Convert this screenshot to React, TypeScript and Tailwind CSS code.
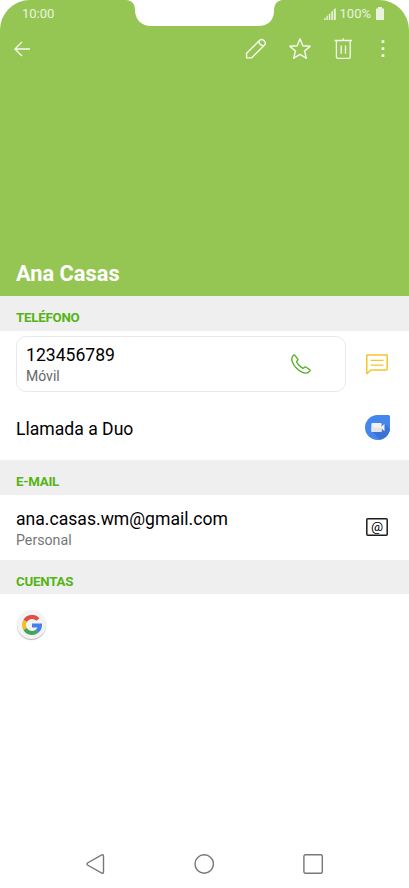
import type { ReactNode } from "react";

function StatusBar() {
  return (
    <div className="flex h-7 items-center justify-between pl-[22px] pr-[25px] text-[13px] leading-7 text-white/80">
      <span>10:00</span>
      <div className="flex items-center">
        <svg className="-mt-px h-3 w-3" viewBox="0 0 12 12" fill="currentColor">
          <path d="M0 12V10.8L1.5 9.4V12zM2.4 12V8.6L3.8 7.3V12zM4.8 12V6.3L6.3 4.9V12zM7.3 12V3.9L8.9 2.4V12zM9.8 12V1.5L11.8 0V12z" />
        </svg>
        <span className="ml-1">100%</span>
        <svg className="-mt-[2px] ml-[5px] h-[13px] w-2" viewBox="0 0 8 13" fill="currentColor">
          <path d="M2 0H6V1.5H8V13H0V1.5H2z" />
        </svg>
      </div>
    </div>
  );
}

function Toolbar() {
  return (
    <div className="flex h-[42px] items-center pl-[14px] pr-[23px] text-white/90">
      <svg className="h-4 w-4" viewBox="0 0 16 16" fill="none" stroke="currentColor" strokeWidth="1.4">
        <path d="M8 1L1 8L8 15M1 8H16" />
      </svg>
      <svg className="ml-[215px] h-[22px] w-[22px]" viewBox="0 0 22 22" fill="none" stroke="currentColor" strokeWidth="1.4" strokeLinejoin="round">
        <path d="M1.6 19.9V15.3L14.7 2.2Q16.8 .5 18.7 2.4L19.4 3.1Q21.2 5.1 19.5 7.1L6.5 19.9zM14.1 2.9Q13.9 7.4 18.7 7.8" />
      </svg>
      <svg className="ml-[21px] h-6 w-6" viewBox="0 0 24 24" fill="none" stroke="currentColor" strokeWidth="1.4" strokeLinejoin="round">
        <path d="M12 1.8L14.8 8.7L22.2 9.3L16.5 14.1L18.4 21.3L12 17.4L5.6 21.3L7.5 14.1L1.8 9.3L9.2 8.7z" />
      </svg>
      <svg className="ml-[22px] h-[22px] w-[18px]" viewBox="0 0 18 22" fill="none" stroke="currentColor" strokeWidth="1.3">
        <path d="M.5 2.5H18M9.2 .3V2.5M2.4 2.5V18.7Q2.4 20.4 4 20.4H14.6Q16.2 20.4 16.2 18.7V2.5M7.2 7.5V15.7M11.5 7.5V15.7" />
      </svg>
      <svg className="ml-[29px] h-[18px] w-1" viewBox="0 0 4 18" fill="currentColor">
        <path d="M.6 .3H3.3V3H.6zM.6 7.2H3.3V9.9H.6zM.6 14.3H3.3V17H.6z" />
      </svg>
    </div>
  );
}

function Header() {
  return (
    <header className="relative flex h-[296px] flex-col rounded-t-[30px] bg-[#95c653]">
      {/* Screen notch */}
      <svg className="absolute left-[126px] top-0 h-[26px] w-[157px]" viewBox="0 0 157 26" fill="#fff">
        <path d="M0 0C6 .5 9 4 9 10C9 19 15 26 25 26H132C142 26 148 20 148 11C148 4 151 .5 157 0z" />
      </svg>
      <StatusBar />
      <Toolbar />
      <h1 className="mt-auto mb-2 pl-4 text-[21.8px] leading-7 font-bold text-white">Ana Casas</h1>
    </header>
  );
}

function SectionTitle({ children }: { children: ReactNode }) {
  return (
    <h2 className="h-[34.5px] bg-[#efefef] pt-[5px] pl-4 text-[13.3px] leading-[33px] font-bold tracking-[-0.018em] text-[#55b414]">
      {children}
    </h2>
  );
}

function PhoneIcon() {
  return (
    <svg className="h-5 w-5" viewBox="0 0 20 20" fill="none" stroke="#50ac20" strokeWidth="1.3" strokeLinejoin="round">
      <path d="M2.8 1Q3.4 .7 3.9 1.3L6.9 5.1Q7.3 5.6 6.8 6.1L5.9 7.2Q5.4 7.8 5.9 8.6Q8.2 12.2 11.5 14.1Q12.2 14.5 12.7 13.9L13.7 13Q14.2 12.6 14.8 13L18.8 15.8Q19.4 16.3 18.9 16.9C17.2 19.2 14.5 19.9 11 18.1C6.6 15.9 3 12.1 1.4 8C.2 4.8 1.1 2.3 2.8 1z" />
    </svg>
  );
}

function MessageIcon() {
  return (
    <svg className="h-[21px] w-[22px]" viewBox="0 0 22 21" fill="none" stroke="#f4c52e" strokeWidth="1.5" strokeLinejoin="round">
      <path d="M.8 1H21.2V14.7Q21.2 16 19.9 16H5L.8 19.8z" />
      <path d="M4.7 6.3H17.5M4.7 11.2H17.5" strokeWidth="1.2" />
    </svg>
  );
}

function DuoIcon() {
  return (
    <svg className="-mt-0.5 h-[25px] w-[25px]" viewBox="0 0 25 25">
      <path d="M12.5 0H23.5Q25 0 25 1.5V12.5A12.5 12.5 0 1 1 12.5 0z" fill="#4486ed" />
      <path d="M7 16.5L14.8 24.8C20.5 24 24.5 19.4 25 14L19.5 8.5z" fill="#3d72d5" />
      <rect x="6.4" y="8.1" width="10.2" height="8.8" rx="1" fill="#f1f2f4" />
      <path d="M15.6 12.5L19.5 8.8V16.2z" fill="#f1f2f4" />
      <path d="M6.4 12.5H16.6V16Q16.6 16.9 15.6 16.9H7.4Q6.4 16.9 6.4 16z" fill="#e3e4e8" />
    </svg>
  );
}

function MailIcon() {
  return (
    <svg className="h-[18px] w-[22px]" viewBox="0 0 22 18">
      <rect x=".8" y=".8" width="20.4" height="16.4" rx="1" fill="none" stroke="#1c1c1c" strokeWidth="1.5" />
      <text x="11" y="12.6" textAnchor="middle" fontSize="13.5" fill="#000">@</text>
    </svg>
  );
}

function GoogleIcon() {
  return (
    <div className="flex h-[29px] w-[29px] items-center justify-center rounded-full bg-[#f3f3f3] shadow-[0_1px_1px_#bbb]">
      <svg className="h-5 w-5" viewBox="0 0 20 20" fill="none" strokeWidth="4">
        <path d="M16 4.5A8 8 0 0 0 3.1 6" stroke="#df5043" />
        <path d="M3.1 6A8 8 0 0 0 3.1 14" stroke="#f5bd2c" />
        <path d="M3.1 14A8 8 0 0 0 14.9 16.3" stroke="#43a45b" />
        <path d="M14.9 16.3A8 8 0 0 0 18 10.4H10" stroke="#467fe5" />
      </svg>
    </div>
  );
}

function NavigationBar() {
  return (
    <nav className="mt-auto flex h-12 items-center pl-[86px] text-[#777]">
      <svg className="h-5 w-[19px]" viewBox="0 0 19 20" fill="none" stroke="currentColor" strokeWidth="1.4">
        <path d="M1.5 9Q.5 10 1.5 11L15.8 19.1Q17.5 19.7 17.5 18V2Q17.5 .3 15.8 .9z" />
      </svg>
      <svg className="ml-[89px] h-5 w-5" viewBox="0 0 20 20" fill="none" stroke="currentColor" strokeWidth="1.4">
        <circle cx="10.2" cy="10" r="9.2" />
      </svg>
      <svg className="ml-[89px] h-5 w-5" viewBox="0 0 20 20" fill="none" stroke="currentColor" strokeWidth="1.4">
        <rect x=".9" y=".8" width="18.4" height="18.4" rx="1.5" />
      </svg>
    </nav>
  );
}

export default function App() {
  return (
    <div className="flex h-[888px] w-[409px] flex-col overflow-hidden bg-white font-['Roboto',sans-serif] text-black">
      <Header />
      <div className="h-[35px] bg-[#efefef]">
        <SectionTitle>TELÉFONO</SectionTitle>
      </div>
      <div className="flex h-[65px] items-center pt-px pr-[21px] pl-4">
        <div className="flex h-14 w-[330px] items-center justify-between rounded-[10px] border border-[#e9e9e9] pr-[34px] pl-[9px]">
          <div className="pt-px">
            <p className="text-[17.6px] leading-[23px]">123456789</p>
            <p className="text-[14px] leading-[18px] text-[#666]">Móvil</p>
          </div>
          <PhoneIcon />
        </div>
        <div className="ml-auto">
          <MessageIcon />
        </div>
      </div>
      <div className="flex h-16 items-center justify-between pr-[19.5px] pl-4">
        <p className="pt-[2px] text-[17.6px]">Llamada a Duo</p>
        <DuoIcon />
      </div>
      <SectionTitle>E-MAIL</SectionTitle>
      <div className="flex h-[65px] items-center justify-between pr-[21px] pl-4">
        <div className="pt-[3px]">
          <p className="text-[17.6px] leading-[23px]">ana.casas.wm@gmail.com</p>
          <p className="text-[14.2px] leading-[18px] text-[#777]">Personal</p>
        </div>
        <MailIcon />
      </div>
      <SectionTitle>CUENTAS</SectionTitle>
      <div className="pt-4 pl-[17px]">
        <GoogleIcon />
      </div>
      <NavigationBar />
    </div>
  );
}
